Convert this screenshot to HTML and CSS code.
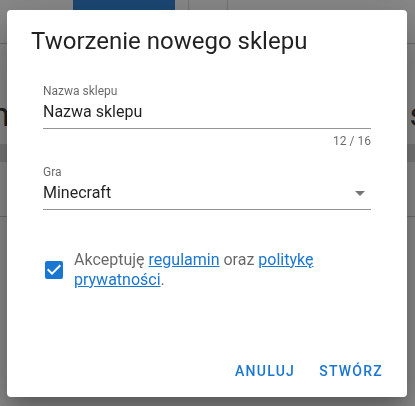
FILE: index.html
```html
<!DOCTYPE html>
<html lang="pl">
<head>
<meta charset="utf-8">
<title>Tworzenie nowego sklepu</title>
<link rel="stylesheet" href="styles.css">
</head>
<body>
<div class="page">
  <div class="topbar">
    <div class="under-btn">PRZEJDŹ</div>
    <div class="under-sep"></div>
    <div class="under-sep second"></div>
  </div>
  <div class="under-heading"><span class="left">n</span><span class="right">s</span></div>
  <div class="under-chips"><span class="chip"></span><span class="chip"></span></div>
  <div class="under-line"></div>
</div>

<div class="scrim">
  <div class="dialog" role="dialog">
    <div class="dialog-title">Tworzenie nowego sklepu</div>
    <div class="dialog-content">
      <div class="field">
        <div class="field-label">Nazwa sklepu</div>
        <div class="field-row">
          <div class="field-input">Nazwa sklepu</div>
        </div>
      </div>
      <div class="counter">12 / 16</div>

      <div class="field select">
        <div class="field-label">Gra</div>
        <div class="field-row">
          <div class="field-input">Minecraft</div>
          <svg class="arrow" viewBox="0 0 24 24" width="24" height="24"><path d="M7,10L12,15L17,10H7Z"/></svg>
        </div>
      </div>

      <div class="check-row">
        <svg class="checkbox" viewBox="0 0 24 24" width="24" height="24"><path d="M10,17L5,12L6.41,10.58L10,14.17L17.59,6.58L19,8M19,3H5C3.89,3 3,3.89 3,5V19A2,2 0 0,0 5,21H19A2,2 0 0,0 21,19V5C21,3.89 20.1,3 19,3Z"/></svg>
        <div class="check-label">Akceptuję <a href="#">regulamin</a> oraz <a href="#">politykę prywatności</a>.</div>
      </div>
    </div>
    <div class="dialog-actions">
      <button class="text-btn">Anuluj</button>
      <button class="text-btn">Stwórz</button>
    </div>
  </div>
</div>
</body>
</html>
```

FILE: styles.css
```css
html, body {
  margin: 0;
  padding: 0;
  height: 100%;
}
body {
  background: #ffffff;
  font-family: Roboto, "Liberation Sans", Arial, sans-serif;
  overflow: hidden;
}

/* underlying page (under the scrim) */
.page {
  height: 100%;
  overflow: hidden;
}
.topbar {
  height: 43px;
  border-bottom: 1px solid #c4c4c4;
  display: flex;
  align-items: flex-start;
}
.under-btn {
  margin-left: 73px;
  width: 102px;
  height: 36px;
  margin-top: -23px;
  background: #1976d2;
  color: #ffffff;
  font-size: 14px;
  font-weight: 500;
  letter-spacing: 1.25px;
  display: flex;
  align-items: center;
  justify-content: center;
  border-radius: 0 0 2px 2px;
}
.under-sep {
  margin-left: 13px;
  width: 1px;
  height: 43px;
  background: #d6d6d6;
}
.under-sep.second {
  margin-left: 38px;
}
.under-heading {
  margin-top: 50px;
  display: flex;
  justify-content: space-between;
  font-size: 34px;
  line-height: 40px;
  color: #222;
  overflow: hidden;
}
.under-heading .left {
  margin-left: -9px;
}
.under-heading .right {
  margin-right: -12px;
}
.under-chips {
  margin-top: 10px;
  display: flex;
  justify-content: space-between;
  overflow: hidden;
}
.chip {
  width: 40px;
  height: 18px;
  border-radius: 9px;
  background: #dcdcdc;
}
.chip:first-child {
  margin-left: -16px;
}
.chip:last-child {
  margin-right: -16px;
}
.under-line {
  margin-top: 54px;
  height: 1px;
  background: #c4c4c4;
}

/* scrim + dialog */
.scrim {
  position: fixed;
  inset: 0;
  padding-right: 1px;
  background: rgba(33, 33, 33, 0.53);
  display: flex;
  align-items: center;
  justify-content: center;
}
.dialog {
  width: 400px;
  height: 387px;
  background: #ffffff;
  border-radius: 4px;
  display: flex;
  flex-direction: column;
  box-shadow: 0 11px 15px -7px rgba(0,0,0,.2), 0 24px 38px 3px rgba(0,0,0,.14), 0 9px 46px 8px rgba(0,0,0,.12);
}
.dialog-title {
  padding: 15px 24px 0;
  font-size: 24px;
  line-height: 32px;
  color: rgba(0, 0, 0, 0.87);
}
.dialog-content {
  padding: 26px 36px 0;
}
.field {
  border-bottom: 1px solid rgba(0, 0, 0, 0.42);
  padding-bottom: 6px;
}
.field-label {
  font-size: 12px;
  line-height: 16px;
  color: rgba(0, 0, 0, 0.6);
}
.field-row {
  display: flex;
  align-items: center;
  margin-top: 3px;
}
.field-input {
  flex: 1;
  font-size: 16px;
  line-height: 20px;
  color: rgba(0, 0, 0, 0.87);
}
.arrow {
  fill: rgba(0, 0, 0, 0.54);
  margin: -2px -1px -2px 0;
}
.counter {
  margin-top: 6px;
  font-size: 12px;
  line-height: 12px;
  text-align: right;
  color: rgba(0, 0, 0, 0.6);
}
.select {
  margin-top: 17px;
}
.check-row {
  margin-top: 40px;
  display: flex;
  align-items: center;
}
.checkbox {
  fill: #1976d2;
  margin-left: -1px;
  margin-right: 8px;
  flex: none;
}
.check-label {
  font-size: 16px;
  line-height: 20px;
  color: rgba(0, 0, 0, 0.6);
}
.check-label a {
  color: #1976d2;
  text-decoration: underline;
}
.dialog-actions {
  margin-top: auto;
  padding: 8px 16px 8px 8px;
  display: flex;
  justify-content: flex-end;
  gap: 8px;
}
.text-btn {
  height: 36px;
  padding: 0 8px;
  border: none;
  background: none;
  font-family: Roboto, "Liberation Sans", Arial, sans-serif;
  font-size: 14px;
  font-weight: 500;
  letter-spacing: 1.25px;
  text-transform: uppercase;
  color: #1976d2;
  border-radius: 4px;
}
```
